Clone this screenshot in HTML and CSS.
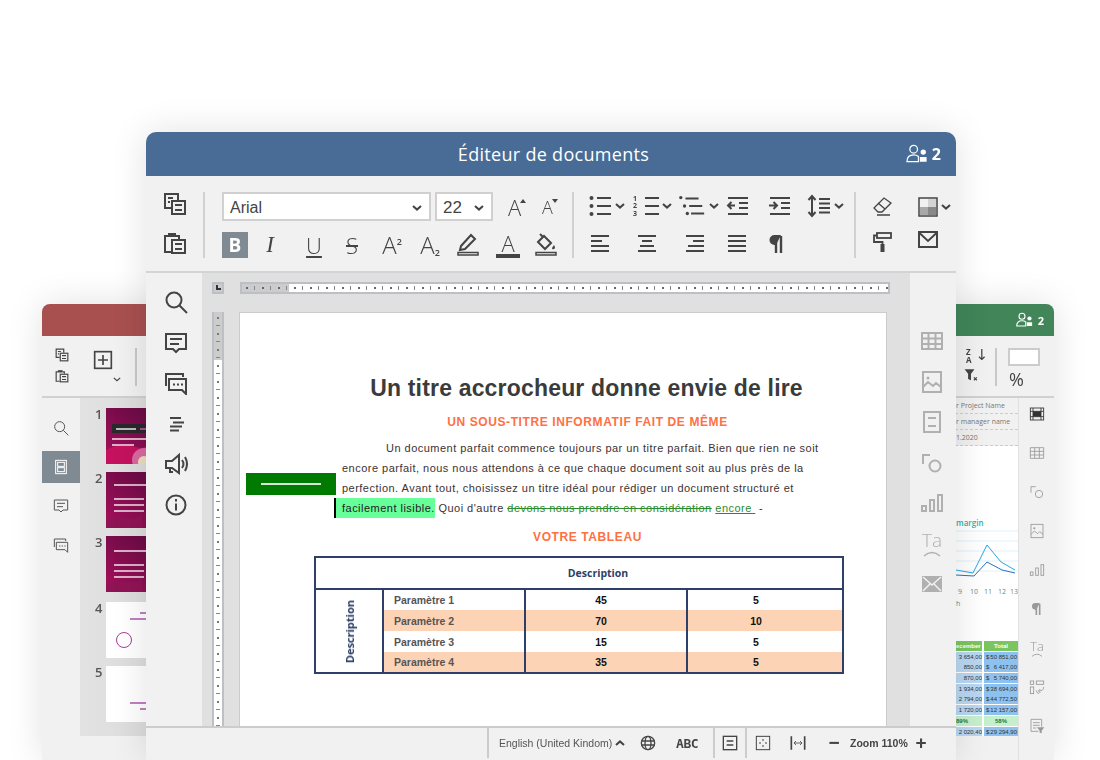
FILE: index.html
```html
<html>
  <head>
    <meta charset="UTF-8" />
    <title>Éditeur de documents</title>
    <link rel="stylesheet" href="styles.css">
  </head>
  <body>
    <svg class="sprite" xmlns="http://www.w3.org/2000/svg">
      <symbol id="i-copy" viewBox="0 0 24 24"><path d="M8 16H2V2h13v6"/><path d="M5 6h5M5 10h2"/><rect x="9" y="9" width="13" height="13"/><path d="M12 13h7M12 18h7"/></symbol>
      <symbol id="i-paste" viewBox="0 0 24 24"><path d="M8 21H2V5h3M13 5h3v3"/><path d="M5 2h8v4H5z" class="solid"/><rect x="9" y="9" width="13" height="13"/><path d="M12 13h7M12 18h7"/></symbol>
      <symbol id="i-search" viewBox="0 0 24 24"><circle cx="10" cy="10" r="7.5"/><path d="M15.5 15.5L23 23"/></symbol>
      <symbol id="i-comment" viewBox="0 0 24 24"><path d="M2 3h20v15h-7l-3 3-3-3H2z"/><path d="M6 8h12M6 13h9"/></symbol>
      <symbol id="i-comments" viewBox="0 0 24 24"><path d="M2 15V3h17v3"/><path d="M5 8h17v15l-4-4H5z"/><path d="M9 13.5h2M13 13.5h2M17 13.5h2"/></symbol>
      <symbol id="i-outline" viewBox="0 0 24 24"><path d="M6 6h11M9 10.500h11M6 14.500h12M6 18.500h9"/></symbol>
      <symbol id="i-speaker" viewBox="0 0 24 24"><path d="M2 9h6l7-6v18l-7-5H2z"/><path d="M6 16v4h3"/><path d="M18 8q3 4 0 8M21 5q4 7 0 14"/></symbol>
      <symbol id="i-info" viewBox="0 0 24 24"><circle cx="12" cy="12" r="9.5"/><path d="M12 10.5v7"/><path d="M12 6v2.4"/></symbol>
      <symbol id="i-bullets" viewBox="0 0 24 24"><path d="M9 4h14M9 12h14M9 20h14"/><circle cx="3.500" cy="4" r="2" class="solid"/><circle cx="3.500" cy="12" r="2" class="solid"/><circle cx="3.500" cy="20" r="2" class="solid"/></symbol>
      <symbol id="i-numlines" viewBox="0 0 14 24"><path d="M0 4h14M0 12h14M0 20h14"/></symbol>
      <symbol id="i-multi" viewBox="0 0 30 24"><path d="M8 4h14M12 12h14M14 20h14"/><circle cx="3" cy="3" r="1.800" class="solid"/><circle cx="7" cy="12" r="1.800" class="solid"/><circle cx="10" cy="20" r="1.800" class="solid"/></symbol>
      <symbol id="i-chev" viewBox="0 0 10 6"><path d="M1 1l4 3.6L9 1"/></symbol>
      <symbol id="i-outdent" viewBox="0 0 24 24"><path d="M3 4h20M14 9h9M14 14h9M3 20h20"/><path d="M10 11.5H3M6.5 8l-3.5 3.5L6.5 15"/></symbol>
      <symbol id="i-indent" viewBox="0 0 24 24"><path d="M3 4h20M14 9h9M14 14h9M3 20h20"/><path d="M2 11.5h8M6.500 8l3.500 3.500L6.500 15"/></symbol>
      <symbol id="i-spacing" viewBox="0 0 24 24"><path d="M5 2v20M1.500 6L5 2l3.500 4M1.500 18L5 22l3.500-4"/><path d="M12 5h11M12 9.500h11M12 14h11M12 18.500h11"/></symbol>
      <symbol id="i-eraser" viewBox="0 0 20 20"><path d="M1 12L11 2l7 5-9 9H5z"/><path d="M5 7l7 6M4 19h13"/></symbol>
      <symbol id="i-palette" viewBox="0 0 20 20"><rect x="1" y="1" width="18" height="18" class="thin"/><rect x="10" y="2" width="8" height="8" class="tone-a"/><rect x="2" y="10" width="8" height="8" class="tone-b"/><rect x="10" y="10" width="8" height="8" class="tone-c"/></symbol>
      <symbol id="i-roller" viewBox="0 0 20 20"><rect x="4" y="1" width="14" height="5"/><path d="M4 3.500H1V10h8.500v3"/><rect x="7.500" y="12" width="4" height="8" class="solid"/></symbol>
      <symbol id="i-mail" viewBox="0 0 20 18"><rect x="1" y="1" width="18" height="15"/><path d="M1.500 2l8.500 8 8.500-8"/></symbol>
      <symbol id="i-align-left" viewBox="0 0 24 24"><path d="M3 4h18M3 9h11M3 14h18M3 19h18"/></symbol>
      <symbol id="i-align-center" viewBox="0 0 24 24"><path d="M3 4h18M7 9h10M5 14h14M3 19h18"/></symbol>
      <symbol id="i-align-right" viewBox="0 0 24 24"><path d="M3 4h18M10 9h11M5 14h16M3 19h18"/></symbol>
      <symbol id="i-justify" viewBox="0 0 24 24"><path d="M3 4h18M3 9h18M3 14h18M3 19h18"/></symbol>
      <symbol id="i-pen" viewBox="0 0 24 24"><path d="M5 14L15 3l4 4L9 17l-5 1z"/><path d="M2 23h20v-2.500H2z" class="thin"/></symbol>
      <symbol id="i-fill" viewBox="0 0 24 24"><path d="M4 10l6-6 7 7-6 6z"/><path d="M6 2l3 3"/><path d="M20 13q2 3 0 4t-2-1z" class="solid"/><path d="M2 23h20v-2.500H2z" class="thin"/></symbol>
      <symbol id="i-users" viewBox="0 0 24 20"><circle cx="8" cy="5" r="4"/><path d="M1 18q0-7 7-7 3 0 5 1.500V18z"/><circle cx="18" cy="8" r="2.800" class="solid"/><path d="M14.500 18v-5h7v5z" class="solid"/></symbol>
      <symbol id="i-table" viewBox="0 0 24 24"><path d="M2 4h20v16H2zM2 9.500h20M2 15h20M8.500 4v16M15.500 4v16"/></symbol>
      <symbol id="i-image" viewBox="0 0 24 24"><rect x="3" y="2" width="18" height="20"/><circle cx="8" cy="8" r="1.500" class="solid"/><path d="M3 17l5-5 5 4 3-3 5 4"/></symbol>
      <symbol id="i-doc" viewBox="0 0 24 24"><rect x="4" y="2" width="16" height="20"/><path d="M8 8h8M8 16h8"/></symbol>
      <symbol id="i-docw" viewBox="0 0 24 24"><rect x="2" y="2" width="20" height="20"/><path d="M7 9h10M7 15h10"/></symbol>
      <symbol id="i-pages" viewBox="0 0 24 24"><rect x="4" y="2" width="16" height="20"/><rect x="7" y="5" width="10" height="6"/><rect x="7" y="13" width="10" height="6"/></symbol>
      <symbol id="i-shapes" viewBox="0 0 24 24"><path d="M10 4H3v9"/><circle cx="15" cy="15" r="5.500"/></symbol>
      <symbol id="i-chart" viewBox="0 0 24 24"><rect x="2" y="15" width="4" height="5"/><rect x="10" y="9" width="4" height="11"/><rect x="18" y="4" width="4" height="16"/></symbol>
      <symbol id="i-arc" viewBox="0 0 24 8"><path d="M4 7q8-7 16 0"/></symbol>
      <symbol id="i-mailfill" viewBox="0 0 24 24"><rect x="2" y="4" width="20" height="16" class="solid"/><path d="M3 5l9 8 9-8M3 19l7-7M21 19l-7-7" class="knock"/></symbol>
      <symbol id="i-pilcrow" viewBox="0 0 24 24"><path d="M11 4v17M16 4v17" stroke-width="2.400"/><path d="M16 3H9.500a5 5 0 0 0 0 10H11z" class="solid"/></symbol>
      <symbol id="i-layout" viewBox="0 0 24 24"><rect x="2" y="3" width="20" height="18"/><path d="M2 8h20M2 16h20M6 3v18M18 3v18"/><rect x="6" y="8" width="12" height="8" class="solid"/></symbol>
      <symbol id="i-swap" viewBox="0 0 24 24"><rect x="2" y="3" width="5" height="5"/><rect x="2" y="12" width="5" height="10"/><rect x="11" y="3" width="11" height="5"/><path d="M22 12q0 6-7 6M17 15l-3 3 3 3M11 17q0 4 4 5"/></symbol>
      <symbol id="i-pivot" viewBox="0 0 24 24"><path d="M14 20H3V2h16v11"/><path d="M6 7h10M6 11h10M6 15h5"/><path d="M12 14h11l-4 5v4l-3-1v-3z" class="solid"/></symbol>
      <symbol id="i-globe" viewBox="0 0 24 24"><circle cx="12" cy="12" r="10"/><ellipse cx="12" cy="12" rx="4.500" ry="10"/><path d="M2 9h20M2 15h20"/></symbol>
      <symbol id="i-fit" viewBox="0 0 24 24"><rect x="2" y="2" width="20" height="20"/><path d="M12 6v3M12 15v3M6 12h3M15 12h3"/></symbol>
      <symbol id="i-fitw" viewBox="0 0 24 24"><path d="M2 2v20M22 2v20" stroke-width="2.500"/><path d="M6 12h12M9 9l-3 3 3 3M15 9l3 3-3 3" stroke-width="1.200"/></symbol>
      <symbol id="i-plusbox" viewBox="0 0 24 24"><rect x="2" y="2" width="20" height="20"/><path d="M12 6v12M6 12h12"/></symbol>
      <symbol id="i-funnel" viewBox="0 0 24 24"><path d="M1 2h17l-6 8v11l-5-2v-9z" class="solid"/><path d="M17 16l5 5M22 16l-5 5"/></symbol>
    </svg>

    <!-- presentation window behind -->
    <div class="win win-left">
      <div class="win-head head-red"></div>
      <div class="small-bar">
        <div class="small-col">
          <svg class="ic ic14"><use href="#i-copy"/></svg>
          <svg class="ic ic14"><use href="#i-paste"/></svg>
        </div>
        <div class="add-col">
          <svg class="ic ic20"><use href="#i-plusbox"/></svg>
          <svg class="ic chev-sm"><use href="#i-chev"/></svg>
        </div>
        <div class="small-sep"></div>
      </div>
      <div class="left-body">
        <div class="left-rail">
          <div class="rail-btn"><svg class="ic ic16"><use href="#i-search"/></svg></div>
          <div class="rail-btn active"><svg class="ic ic16"><use href="#i-pages"/></svg></div>
          <div class="rail-btn"><svg class="ic ic16"><use href="#i-comment"/></svg></div>
          <div class="rail-btn"><svg class="ic ic16"><use href="#i-comments"/></svg></div>
        </div>
        <div class="slides">
          <div class="slide"><span class="slide-no">1</span>
            <svg class="thumb" viewBox="0 0 90 56">
              <defs>
                <linearGradient id="mag" x1="0" y1="1" x2="1" y2="0"><stop offset="0" stop-color="#a80f5c"/><stop offset="1" stop-color="#4f0a3c"/></linearGradient>
              </defs>
              <rect width="90" height="56" fill="url(#mag)"/>
              <path d="M0 42q14-8 26-4t14 0v18H0z" fill="#c4125f"/>
              <circle cx="38" cy="52" r="12" fill="#d66ba0"/>
              <circle cx="38" cy="54" r="6" fill="#eedcc0"/>
              <rect x="6" y="16" width="60" height="9" fill="#2a2a2c"/>
              <rect x="10" y="20" width="20" height="2" fill="#bbb"/>
              <rect x="34" y="20" width="20" height="2" fill="#b04a90"/>
              <rect x="6" y="30" width="60" height="2" fill="#dcb0c8"/>
              <rect x="6" y="36" width="22" height="2" fill="#dcb0c8"/>
            </svg>
          </div>
          <div class="slide"><span class="slide-no">2</span>
            <svg class="thumb" viewBox="0 0 90 56">
              <rect width="90" height="56" fill="url(#mag)"/>
              <path d="M0 48q10-4 20-2t16-4v14H0z" fill="#8f1456"/>
              <path d="M8 13h60M8 27h30M8 33h30M8 39h30" stroke="#d8b0c8" stroke-width="2"/>
            </svg>
          </div>
          <div class="slide"><span class="slide-no">3</span>
            <svg class="thumb" viewBox="0 0 90 56">
              <rect width="90" height="56" fill="url(#mag)"/>
              <path d="M0 48q10-4 20-2t16-4v14H0z" fill="#8f1456"/>
              <path d="M8 15h60M8 29h30M8 35h30M8 41h30" stroke="#d8b0c8" stroke-width="2"/>
            </svg>
          </div>
          <div class="slide"><span class="slide-no">4</span>
            <svg class="thumb" viewBox="0 0 90 56">
              <rect width="90" height="56" fill="#fff"/>
              <path d="M34 11h30M24 17h40" stroke="#c080c0" stroke-width="2"/>
              <circle cx="18" cy="38" r="7.500" fill="none" stroke="#a83c9c"/>
            </svg>
          </div>
          <div class="slide"><span class="slide-no">5</span>
            <svg class="thumb" viewBox="0 0 90 56">
              <rect width="90" height="56" fill="#fff"/>
              <path d="M24 37h40M34 43h30" stroke="#c080c0" stroke-width="2"/>
            </svg>
          </div>
        </div>
      </div>
    </div>

    <!-- spreadsheet window behind -->
    <div class="win win-right">
      <div class="win-head head-green">
        <svg class="ic ic-users-sm"><use href="#i-users"/></svg>
        <span class="user-no-sm">2</span>
      </div>
      <div class="small-bar bar-right">
        <div class="sort-col">
          <div class="sort"><span class="sort-az">Z<br>A</span><span class="sort-arrow">↓</span></div>
          <svg class="ic ic14 funnel"><use href="#i-funnel"/></svg>
        </div>
        <div class="small-sep"></div>
        <div class="num-col">
          <div class="num-box"></div>
          <span class="pct">%</span>
        </div>
      </div>
      <div class="right-body">
        <div class="sheet">
          <div class="sheet-row">r Project Name</div>
          <div class="sheet-row">r manager name</div>
          <div class="sheet-row">1.2020</div>
          <svg class="chart" width="78" height="164" viewBox="0 0 78 164">
            <text x="16" y="80" class="chart-title">margin</text>
            <path d="M16 85h62M16 95h62M16 105h62M16 115h62M16 125h62" stroke="#dff1f9"/>
            <polyline points="16,124 33,127 47,99 61,116 75,124" class="line-a"/>
            <polyline points="16,129 34,130 47,116 62,124 75,127" class="line-b"/>
            <text x="18" y="148" class="axis">9</text>
            <text x="30" y="148" class="axis">10</text>
            <text x="44" y="148" class="axis">11</text>
            <text x="58" y="148" class="axis">12</text>
            <text x="70" y="148" class="axis">13</text>
            <text x="16" y="160" class="axis">h</text>
          </svg>
          <div class="mini-table">
            <div class="mini-head">ecember</div><div class="mini-head ctr">Total</div>
            <div class="mini-a">3 654,00</div><div class="mini-b"><span>$</span>50 851,00</div>
            <div class="mini-a">850,00</div><div class="mini-b"><span>$</span>6 417,00</div>
            <div class="mini-a">870,00</div><div class="mini-b"><span>$</span>5 740,00</div>
            <div class="mini-a">1 934,00</div><div class="mini-b"><span>$</span>38 694,00</div>
            <div class="mini-a">2 794,00</div><div class="mini-b"><span>$</span>44 772,50</div>
            <div class="mini-a">1 720,00</div><div class="mini-b"><span>$</span>12 157,00</div>
            <div class="mini-g">89%</div><div class="mini-g ctr">58%</div>
            <div class="mini-a">2 020,40</div><div class="mini-b"><span>$</span>29 294,90</div>
          </div>
        </div>
        <div class="right-rail">
          <svg class="ic ic16 dark"><use href="#i-layout"/></svg>
          <svg class="ic ic16"><use href="#i-table"/></svg>
          <svg class="ic ic16"><use href="#i-shapes"/></svg>
          <svg class="ic ic16"><use href="#i-image"/></svg>
          <svg class="ic ic16"><use href="#i-chart"/></svg>
          <svg class="ic ic16"><use href="#i-pilcrow"/></svg>
          <div class="ta-ic ta-sm">Ta<svg class="ic"><use href="#i-arc"/></svg></div>
          <svg class="ic ic16"><use href="#i-swap"/></svg>
          <svg class="ic ic16"><use href="#i-pivot"/></svg>
        </div>
      </div>
    </div>

    <!-- main document window -->
    <div class="win win-main">
      <div class="title-bar">
        <span class="title-text">Éditeur de documents</span>
        <div class="users">
          <svg class="ic ic-users"><use href="#i-users"/></svg>
          <span class="user-no">2</span>
        </div>
      </div>

      <div class="toolbar">
        <div class="group-clip">
          <svg class="ic ic24"><use href="#i-copy"/></svg>
          <svg class="ic ic24"><use href="#i-paste"/></svg>
        </div>
        <div class="tb-sep"></div>
        <div class="group-font">
          <div class="font-row">
            <div class="select sel-font"><span>Arial</span><svg class="ic chev"><use href="#i-chev"/></svg></div>
            <div class="select sel-size"><span>22</span><svg class="ic chev"><use href="#i-chev"/></svg></div>
            <div class="grow up">A<i></i></div>
            <div class="grow down">A<i></i></div>
          </div>
          <div class="style-row">
            <div class="glyph bold-on">B</div>
            <div class="glyph italic">I</div>
            <div class="glyph under">U</div>
            <div class="glyph strike">S</div>
            <div class="glyph big">A<sup>2</sup></div>
            <div class="glyph big">A<sub>2</sub></div>
            <svg class="ic ic24"><use href="#i-pen"/></svg>
            <div class="glyph color">A</div>
            <svg class="ic ic24"><use href="#i-fill"/></svg>
          </div>
        </div>
        <div class="tb-sep"></div>
        <div class="group-para">
          <div class="para-row1">
            <div class="with-chev"><svg class="ic ic24"><use href="#i-bullets"/></svg><svg class="ic chev"><use href="#i-chev"/></svg></div>
            <div class="with-chev"><span class="num-stack">1<br>2<br>3</span><svg class="ic num-lines"><use href="#i-numlines"/></svg><svg class="ic chev"><use href="#i-chev"/></svg></div>
            <div class="with-chev"><svg class="ic ic-multi"><use href="#i-multi"/></svg><svg class="ic chev"><use href="#i-chev"/></svg></div>
            <svg class="ic ic24"><use href="#i-outdent"/></svg>
            <svg class="ic ic24"><use href="#i-indent"/></svg>
            <div class="with-chev"><svg class="ic ic24"><use href="#i-spacing"/></svg><svg class="ic chev"><use href="#i-chev"/></svg></div>
          </div>
          <div class="para-row2">
            <svg class="ic ic24"><use href="#i-align-left"/></svg>
            <svg class="ic ic24"><use href="#i-align-center"/></svg>
            <svg class="ic ic24"><use href="#i-align-right"/></svg>
            <svg class="ic ic24"><use href="#i-justify"/></svg>
            <svg class="ic ic24"><use href="#i-pilcrow"/></svg>
          </div>
        </div>
        <div class="tb-sep"></div>
        <div class="group-misc">
          <svg class="ic ic20 eraser"><use href="#i-eraser"/></svg>
          <div class="with-chev"><svg class="ic ic20"><use href="#i-palette"/></svg><svg class="ic chev"><use href="#i-chev"/></svg></div>
          <svg class="ic ic20 roller"><use href="#i-roller"/></svg>
          <svg class="ic ic-mail"><use href="#i-mail"/></svg>
        </div>
      </div>

      <div class="main-body">
        <div class="main-rail">
          <svg class="ic ic24"><use href="#i-search"/></svg>
          <svg class="ic ic24"><use href="#i-comment"/></svg>
          <svg class="ic ic24"><use href="#i-comments"/></svg>
          <svg class="ic ic24"><use href="#i-outline"/></svg>
          <svg class="ic ic24"><use href="#i-speaker"/></svg>
          <svg class="ic ic24"><use href="#i-info"/></svg>
        </div>

        <div class="workspace">
          <div class="ruler-corner"></div>
          <div class="ruler-h"></div>
          <div class="ruler-v"></div>
          <div class="page">
            <h1 class="doc-title">Un titre accrocheur donne envie de lire</h1>
            <h2 class="doc-sub">UN SOUS-TITRE INFORMATIF FAIT DE MÊME</h2>
            <div class="doc-text">
              <span class="line first">Un document parfait commence toujours par un titre parfait. Bien que rien ne soit</span>
              <span class="line">encore parfait, nous nous attendons à ce que chaque document soit au plus près de la</span>
              <span class="line">perfection. Avant tout, choisissez un titre idéal pour rédiger un document structuré et</span>
              <span class="line"><span class="mark">facilement lisible.</span> Quoi d'autre <s class="del">devons nous prendre en considération</s> <u class="ins">encore </u> -</span>
            </div>
            <h3 class="doc-sub tab-title">VOTRE TABLEAU</h3>
            <table class="doc-table">
              <colgroup><col class="col-side"><col class="col-name"><col class="col-a"><col></colgroup>
              <tr class="tr-head"><th colspan="4">Description</th></tr>
              <tr><td rowspan="4" class="td-side"><span>Description</span></td><td class="td-name">Paramètre 1</td><td class="td-num">45</td><td class="td-num end">5</td></tr>
              <tr class="peach"><td class="td-name">Paramètre 2</td><td class="td-num">70</td><td class="td-num end">10</td></tr>
              <tr><td class="td-name">Paramètre 3</td><td class="td-num">15</td><td class="td-num end">5</td></tr>
              <tr class="peach"><td class="td-name">Paramètre 4</td><td class="td-num">35</td><td class="td-num end">5</td></tr>
            </table>
            <div class="track-note"><i></i></div>
          </div>
        </div>

        <div class="main-panel">
          <svg class="ic ic24"><use href="#i-table"/></svg>
          <svg class="ic ic24"><use href="#i-image"/></svg>
          <svg class="ic ic24"><use href="#i-doc"/></svg>
          <svg class="ic ic24"><use href="#i-shapes"/></svg>
          <svg class="ic ic24"><use href="#i-chart"/></svg>
          <div class="ta-ic">Ta<svg class="ic"><use href="#i-arc"/></svg></div>
          <svg class="ic ic24"><use href="#i-mailfill"/></svg>
        </div>
      </div>

      <div class="status">
        <div class="seg seg-lang">
          <span class="lang">English (United Kindom)</span>
          <svg class="ic chev-up"><use href="#i-chev"/></svg>
          <svg class="ic ic16 globe"><use href="#i-globe"/></svg>
          <span class="abc">ABC</span>
        </div>
        <div class="seg seg-doc"><svg class="ic ic16"><use href="#i-docw"/></svg></div>
        <div class="seg seg-zoom">
          <svg class="ic ic16 fit"><use href="#i-fit"/></svg>
          <svg class="ic ic16 fitw"><use href="#i-fitw"/></svg>
          <span class="zoom-btn minus">−</span>
          <span class="zoom-text">Zoom 110%</span>
          <span class="zoom-btn plus">+</span>
        </div>
      </div>
    </div>
  </body>
</html>
```

FILE: styles.css
```css
html, body {
  margin: 0;
  height: 760px;
  overflow: hidden;
  background: #fff;
  font-family: "Open Sans", sans-serif;
}
.sprite {
  position: absolute;
  width: 0;
  height: 0;
}

/* icons */
.ic {
  fill: none;
  stroke: currentColor;
  stroke-width: 2;
  color: #444;
  flex: none;
  display: block;
}
.solid { fill: currentColor; stroke: none; }
.thin { stroke-width: 1.5; }
.knock { stroke: #f1f1f1; stroke-width: 1.5; fill: none; }
.tone-a { fill: #d4d4d4; stroke: none; }
.tone-b { fill: #a8a8a8; stroke: none; }
.tone-c { fill: #888; stroke: none; }
.ic24 { width: 24px; height: 24px; }
.ic20 { width: 20px; height: 20px; }
.ic16 { width: 16px; height: 16px; }
.ic14 { width: 14px; height: 14px; }
.ic-multi { width: 28px; height: 24px; }
.ic-mail { width: 20px; height: 18px; margin-top: 1px; }
.chev { width: 10px; height: 6px; stroke-width: 2; }
.eraser { stroke-width: 1.300; margin: 4px 0 0 2px; }
.roller { margin: 2px 0 0 2px; stroke-width: 1.800; }
.ta-ic {
  width: 24px;
  height: 24px;
  font-size: 19px;
  font-weight: 300;
  line-height: 17px;
  text-align: center;
  color: #b0b0b0;
}
.ta-ic .ic {
  width: 24px;
  height: 8px;
  color: #b0b0b0;
  stroke-width: 1.500;
}
.ta-sm {
  width: 16px;
  height: 16px;
  font-size: 13px;
  line-height: 12px;
  color: #999;
}
.ta-sm .ic { width: 16px; height: 5px; color: #999; }

/* windows */
.win {
  position: absolute;
  background: #f1f1f1;
  overflow: hidden;
  display: flex;
  flex-direction: column;
  box-shadow: 0 0 36px rgba(0, 0, 0, .12);
}
.win-main {
  left: 146px;
  top: 132px;
  width: 810px;
  height: 628px;
  border-radius: 10px 10px 0 0;
}
.win-left {
  left: 42px;
  top: 304px;
  width: 140px;
  height: 456px;
  border-radius: 8px 0 0 0;
}
.win-right {
  left: 940px;
  top: 304px;
  width: 114px;
  height: 456px;
  border-radius: 0 8px 0 0;
}
.win-left > *, .win-right > * { filter: blur(.3px); }
.win-head {
  height: 32px;
  flex: none;
  display: flex;
  align-items: center;
  justify-content: flex-end;
}
.head-red { background: #a85050; }
.head-green { background: #418559; padding-right: 10px; }
.ic-users-sm { width: 18px; height: 16px; color: #fff; stroke-width: 1.500; }
.user-no-sm { color: #fff; font-weight: 700; font-size: 11px; margin-left: 4px; }

/* back window toolbars */
.small-bar {
  flex: none;
  display: flex;
  box-sizing: border-box;
  border-bottom: 2px solid #d0d0d0;
  height: 62px;
}
.small-col {
  margin: 12px 0 0 13px;
  display: flex;
  flex-direction: column;
  gap: 7px;
}
.add-col {
  margin: 14px 0 0 24px;
  width: 30px;
}
.add-col .chev-sm {
  width: 8px;
  height: 5px;
  stroke-width: 1.500;
  margin: 7px 0 0 20px;
}
.small-sep {
  width: 2px;
  height: 38px;
  margin: 12px 0 0 12px;
  background: #c8c8c8;
}
.left-body {
  display: flex;
  flex: 1;
}
.left-rail {
  width: 38px;
  padding-top: 14px;
  flex: none;
}
.rail-btn {
  height: 32px;
  margin-bottom: 7px;
  display: flex;
  align-items: center;
  justify-content: center;
}
.rail-btn .ic { stroke-width: 1.500; color: #555; }
.rail-btn.active { background: #7f8a92; }
.rail-btn.active .ic { color: #fff; }
.slides {
  flex: 1;
  height: 338px;
  background: linear-gradient(90deg, #e2e2e2, #d8d8d8);
  padding-top: 10px;
  box-sizing: border-box;
  display: flex;
  flex-direction: column;
  gap: 8px;
}
.slide {
  display: flex;
  height: 56px;
  padding-left: 15px;
}
.slide:nth-child(4) { margin-top: 2px; }
.slide-no {
  width: 11px;
  font-size: 13px;
  font-weight: 600;
  line-height: 12px;
  color: #555;
}
.thumb {
  width: 90px;
  height: 56px;
  flex: none;
}

/* spreadsheet window */
.bar-right { padding-left: 16px; }
.sort-col {
  width: 37px;
  margin-top: 10px;
}
.sort {
  display: flex;
  gap: 4px;
  height: 20px;
  padding-left: 10px;
}
.sort-az {
  font-size: 8px;
  line-height: 8px;
  font-weight: 700;
  color: #444;
  margin-top: 2px;
}
.sort-arrow {
  font: 15px/18px "DejaVu Sans", sans-serif;
  color: #444;
}
.funnel { margin: 2px 0 0 8px; stroke-width: 2; }
.sort-col + .small-sep { margin-left: 2px; }
.num-col {
  margin: 12px 0 0 11px;
}
.num-box {
  width: 32px;
  height: 18px;
  box-sizing: border-box;
  background: #fff;
  border: 2px solid #ccc;
}
.pct {
  display: block;
  font-size: 18px;
  line-height: 22px;
  color: #444;
  margin: 2px 0 0 1px;
}
.right-body {
  flex: 1;
  display: flex;
  min-height: 0;
}
.sheet {
  width: 78px;
  height: 338px;
  flex: none;
  background: #fff;
  overflow: hidden;
}
.sheet-row {
  height: 16px;
  line-height: 15px;
  box-sizing: border-box;
  background: #f1f1f1;
  border-bottom: 1px dashed #cfd88a;
  padding-left: 16px;
  font-size: 7px;
  color: #777;
}
.chart { display: block; }
.chart-title { font: 600 8px "Open Sans", sans-serif; fill: #1fb5ad; }
.line-a { fill: none; stroke: #29a9e0; stroke-width: 1; }
.line-b { fill: none; stroke: #2a6fc0; stroke-width: 1; }
.axis { font: 7px "Open Sans", sans-serif; fill: #6a8a90; }
.mini-table {
  display: grid;
  grid-template-columns: 26px 34px;
  grid-auto-rows: 10px;
  gap: .7px 2px;
  margin: 31px 0 0 16px;
  font: 6px/10px "Liberation Sans", sans-serif;
  color: #333;
  white-space: nowrap;
}
.mini-table > div { overflow: hidden; }
.mini-head {
  background: #7ac65e;
  color: #fff;
  font-weight: 700;
}
.ctr { text-align: center; }
.mini-a { background: #b9d7f2; text-align: right; }
.mini-b {
  background: #8dc2f0;
  display: flex;
  justify-content: space-between;
  padding: 0 1px 0 2px;
}
.mini-g {
  background: #c6efce;
  color: #1c7a30;
  font-weight: 700;
}
.right-rail {
  flex: 1;
  box-sizing: border-box;
  border-left: 1px solid #e0e0e0;
  padding: 8px 0 0 10px;
  display: flex;
  flex-direction: column;
  gap: 23px;
}
.right-rail .ic { stroke-width: 1.300; color: #999; }
.right-rail .dark { color: #333; }
.right-rail .ta-sm .ic { stroke-width: 1.300; }

/* main title */
.title-bar {
  height: 44px;
  flex: none;
  box-sizing: border-box;
  padding-left: 5px;
  background: #486c96;
  display: flex;
  align-items: center;
  justify-content: center;
  position: relative;
}
.title-text {
  color: #fff;
  font-size: 18px;
  letter-spacing: .3px;
}
.users {
  position: absolute;
  right: 15px;
  top: 10px;
  display: flex;
  align-items: center;
  gap: 3px;
}
.ic-users {
  width: 23px;
  height: 20px;
  color: #fff;
  stroke-width: 1.300;
}
.user-no {
  color: #fff;
  font-weight: 700;
  font-size: 16px;
  line-height: 24px;
}

/* main toolbar */
.toolbar {
  height: 97px;
  flex: none;
  box-sizing: border-box;
  padding-top: 16px;
  display: flex;
  border-bottom: 2px solid #d4d4d4;
}
.tb-sep {
  width: 2px;
  height: 66px;
  background: #d0d0d0;
  flex: none;
}
.group-clip {
  width: 57px;
  box-sizing: border-box;
  padding-left: 17px;
  display: flex;
  flex-direction: column;
  gap: 15px;
}
.group-font {
  width: 367px;
  flex: none;
  box-sizing: border-box;
  padding-left: 17px;
}
.font-row {
  display: flex;
  height: 30px;
}
.select {
  height: 29px;
  box-sizing: border-box;
  background: #fff;
  border: 2px solid #d0d0d0;
  display: flex;
  align-items: center;
  justify-content: space-between;
  padding: 3px 7px 0 6px;
  font: 16px "Liberation Sans", sans-serif;
  color: #444;
}
.sel-font { width: 209px; }
.sel-size {
  width: 58px;
  margin-left: 4px;
  font-size: 17px;
}
.grow {
  width: 33px;
  text-align: center;
  position: relative;
  color: #444;
  line-height: 30px;
  font-weight: 300;
}
.grow.up { font-size: 22px; margin-left: 5px; }
.grow.down { font-size: 18px; }
.grow i {
  position: absolute;
  right: 5px;
  top: 7px;
  border: 3.500px solid transparent;
  border-top: 0;
  border-bottom: 4px solid #444;
}
.grow.down i {
  border-bottom: 0;
  border-top: 4px solid #444;
  right: 6px;
}
.style-row {
  display: grid;
  grid-template-columns: 36px 44px 38px 40px 38px 38px 40px 38px auto;
  margin-top: 10px;
  justify-items: start;
  height: 26px;
}
.glyph {
  width: 24px;
  height: 26px;
  text-align: center;
  font-size: 22px;
  line-height: 26px;
  font-weight: 300;
  color: #444;
}
.bold-on {
  width: 26px;
  background: #7f8a92;
  color: #fff;
  font-size: 19px;
  font-weight: 700;
}
.italic {
  font-family: "Liberation Serif", serif;
  font-style: italic;
  font-size: 23px;
}
.under { text-decoration: underline; text-decoration-thickness: 2px; text-underline-offset: 2px; }
.strike { text-decoration: line-through; text-decoration-thickness: 1.500px; }
.big { font-size: 24px; white-space: nowrap; }
.big sup, .big sub {
  font-size: 9px;
  line-height: 0;
  font-weight: 600;
}
.big sub { vertical-align: -2px; }
.color {
  line-height: 22px;
  border-bottom: 4px solid #444;
  box-sizing: border-box;
}
.group-para {
  width: 280px;
  flex: none;
  box-sizing: border-box;
  padding-left: 14px;
}
.para-row1 {
  display: grid;
  grid-template-columns: 45px 45px 47px 42px 40px auto;
  justify-items: start;
  align-items: center;
  height: 28px;
}
.para-row2 {
  display: grid;
  grid-template-columns: 47px 48px 42px 40px auto;
  justify-items: start;
  margin-top: 12px;
}
.with-chev {
  display: flex;
  align-items: center;
  gap: 3px;
}
.num-stack {
  width: 9px;
  font-size: 7px;
  line-height: 7.500px;
  font-weight: 700;
  color: #444;
}
.num-lines { width: 14px; height: 24px; }
.group-misc {
  padding-left: 15px;
  display: grid;
  grid-template-columns: 47px auto;
  grid-auto-rows: 30px;
  row-gap: 8px;
  justify-items: start;
  height: 66px;
}

/* main body */
.main-body {
  height: 453px;
  flex: none;
  display: flex;
}
.main-rail, .main-panel {
  display: flex;
  flex-direction: column;
  gap: 16.500px;
  flex: none;
}
.main-rail {
  width: 56px;
  box-sizing: border-box;
  padding: 17px 0 0 18px;
}
.main-panel {
  width: 46px;
  box-sizing: border-box;
  padding: 56px 0 0 10px;
}
.main-panel .ic { color: #b0b0b0; }
.workspace {
  width: 708px;
  flex: none;
  background: #e0e0e0;
  box-sizing: border-box;
  padding: 9px 0 0 10px;
  display: grid;
  grid-template-columns: 12px 648px;
  grid-template-rows: 12px 1fr;
  column-gap: 15px;
  row-gap: 18px;
}

/* rulers */
.ruler-corner {
  background: #ccc;
  border: 2px solid #bcc0c4;
  box-sizing: border-box;
  background-image: linear-gradient(#333, #333), linear-gradient(#333, #333);
  background-size: 2px 5px, 5px 2px;
  background-position: 2px 1px, 2px 4px;
  background-repeat: no-repeat;
}
.ruler-h {
  margin: 0 -3px 0 1px;
  box-sizing: border-box;
  border: 2px solid #bcc0c4;
  background-color: #fff;
  background-image:
    repeating-linear-gradient(90deg, transparent 0 4px, #666 4px 6px, transparent 6px 16px),
    repeating-linear-gradient(90deg, transparent 0 12px, #888 12px 13px, transparent 13px 16px),
    linear-gradient(#ccc, #ccc);
  background-size: 100% 2px, 100% 4px, 47px 100%;
  background-position: 0 center, 0 center, 0 0;
  background-repeat: no-repeat;
}
.ruler-v {
  box-sizing: border-box;
  border: solid #bcc0c4;
  border-width: 0 2px;
  background-color: #fff;
  background-image:
    repeating-linear-gradient(180deg, transparent 0 5px, #777 5px 7px, transparent 7px 16px),
    repeating-linear-gradient(180deg, transparent 0 13px, #888 13px 14px, transparent 14px 16px),
    linear-gradient(#ccc, #ccc);
  background-size: 2px 100%, 4px 100%, 100% 48px;
  background-position: center 0, center 0, 0 0;
  background-repeat: no-repeat;
}

/* document page */
.page {
  background: #fff;
  border: 1px solid #ccc;
  border-bottom: 0;
  box-sizing: border-box;
  position: relative;
  padding: 62px 41px 0 74px;
  font-family: "Liberation Sans", sans-serif;
}
.doc-title {
  margin: 0;
  padding-left: 14px;
  text-align: center;
  font-size: 23px;
  line-height: 26px;
  letter-spacing: .18px;
  color: #3b3b3b;
}
.doc-sub {
  margin: 12px 0 0;
  padding-left: 16px;
  text-align: center;
  font-size: 12px;
  line-height: 18px;
  letter-spacing: .6px;
  color: #ff7043;
}
.doc-text {
  margin: 7px 0 0 28px;
  font-size: 11px;
  line-height: 20px;
  color: #3d3232;
}
.line {
  display: block;
  height: 20px;
  white-space: pre-wrap;
  letter-spacing: .48px;
}
.line.first { padding-left: 44px; }
.mark {
  display: inline-block;
  margin-left: -8px;
  padding-left: 6px;
  border-left: 2px solid #000;
  background: #66ff99;
  color: #222;
}
.del { color: #2c8c2c; }
.ins { color: #2c8c2c; }
.tab-title { margin-top: 10px; }
.doc-table {
  margin-top: 10px;
  width: 530px;
  height: 118px;
  border-collapse: collapse;
  border: 2px solid #2e4068;
  table-layout: fixed;
}
.col-side { width: 68px; }
.col-name { width: 142px; }
.col-a { width: 162px; }
.tr-head th {
  height: 31px;
  border-bottom: 2px solid #2e4068;
  padding: 0 0 0 38px;
  font: 700 10.500px "Open Sans", sans-serif;
  color: #2e4068;
}
.doc-table td {
  padding: 0;
  height: 20px;
  font-size: 10.500px;
  font-weight: 700;
  border-left: 2px solid #2e4068;
}
.doc-table .td-side {
  border-left: 0;
  text-align: center;
  font-family: "Open Sans", sans-serif;
  color: #2e4068;
}
.td-side span {
  display: inline-block;
  writing-mode: vertical-rl;
  transform: rotate(180deg);
  font-size: 11px;
}
.doc-table .td-name {
  padding-left: 10px;
  color: #555;
}
.doc-table .td-num {
  padding-right: 10px;
  text-align: center;
  color: #111;
}
.doc-table .end { padding-right: 18px; }
.peach .td-name, .peach .td-num { background: #fcd3b5; }
.track-note {
  position: absolute;
  left: 6px;
  top: 160px;
  width: 90px;
  height: 22px;
  background: #007a00;
  display: flex;
  align-items: center;
  justify-content: center;
}
.track-note i {
  width: 60px;
  height: 2px;
  background: #d8e8d8;
}

/* status bar */
.status {
  flex: 1;
  box-sizing: border-box;
  border-top: 2px solid #ccc;
  padding-left: 341px;
  display: flex;
  font-family: "Liberation Sans", sans-serif;
  color: #444;
}
.seg {
  border-left: 2px solid #ccc;
  box-sizing: border-box;
  display: flex;
  align-items: center;
  margin-bottom: 2px;
}
.seg-lang { width: 226px; padding-left: 10px; }
.lang { font-size: 10.500px; width: 111px; white-space: nowrap; color: #555; }
.chev-up {
  width: 10px;
  height: 6px;
  margin-left: 5px;
  transform: rotate(180deg);
}
.globe { margin-left: 15px; }
.abc {
  margin-left: 20px;
  font: 700 13px "DejaVu Sans Mono", monospace;
  letter-spacing: -.4px;
}
.seg-doc { width: 32px; padding-left: 7px; }
.seg-zoom { flex: 1; }
.fit { margin-left: 8px; stroke-width: 1.500; }
.fitw { margin-left: 19px; stroke-width: 1.500; }
.zoom-btn {
  font-size: 19px;
  font-weight: 700;
  width: 12px;
  text-align: center;
  line-height: 20px;
}
.minus { margin-left: 22px; }
.plus { margin-left: 9px; }
.zoom-text {
  margin-left: 10px;
  width: 56px;
  font-size: 10.500px;
  font-weight: 700;
  white-space: nowrap;
}
```
